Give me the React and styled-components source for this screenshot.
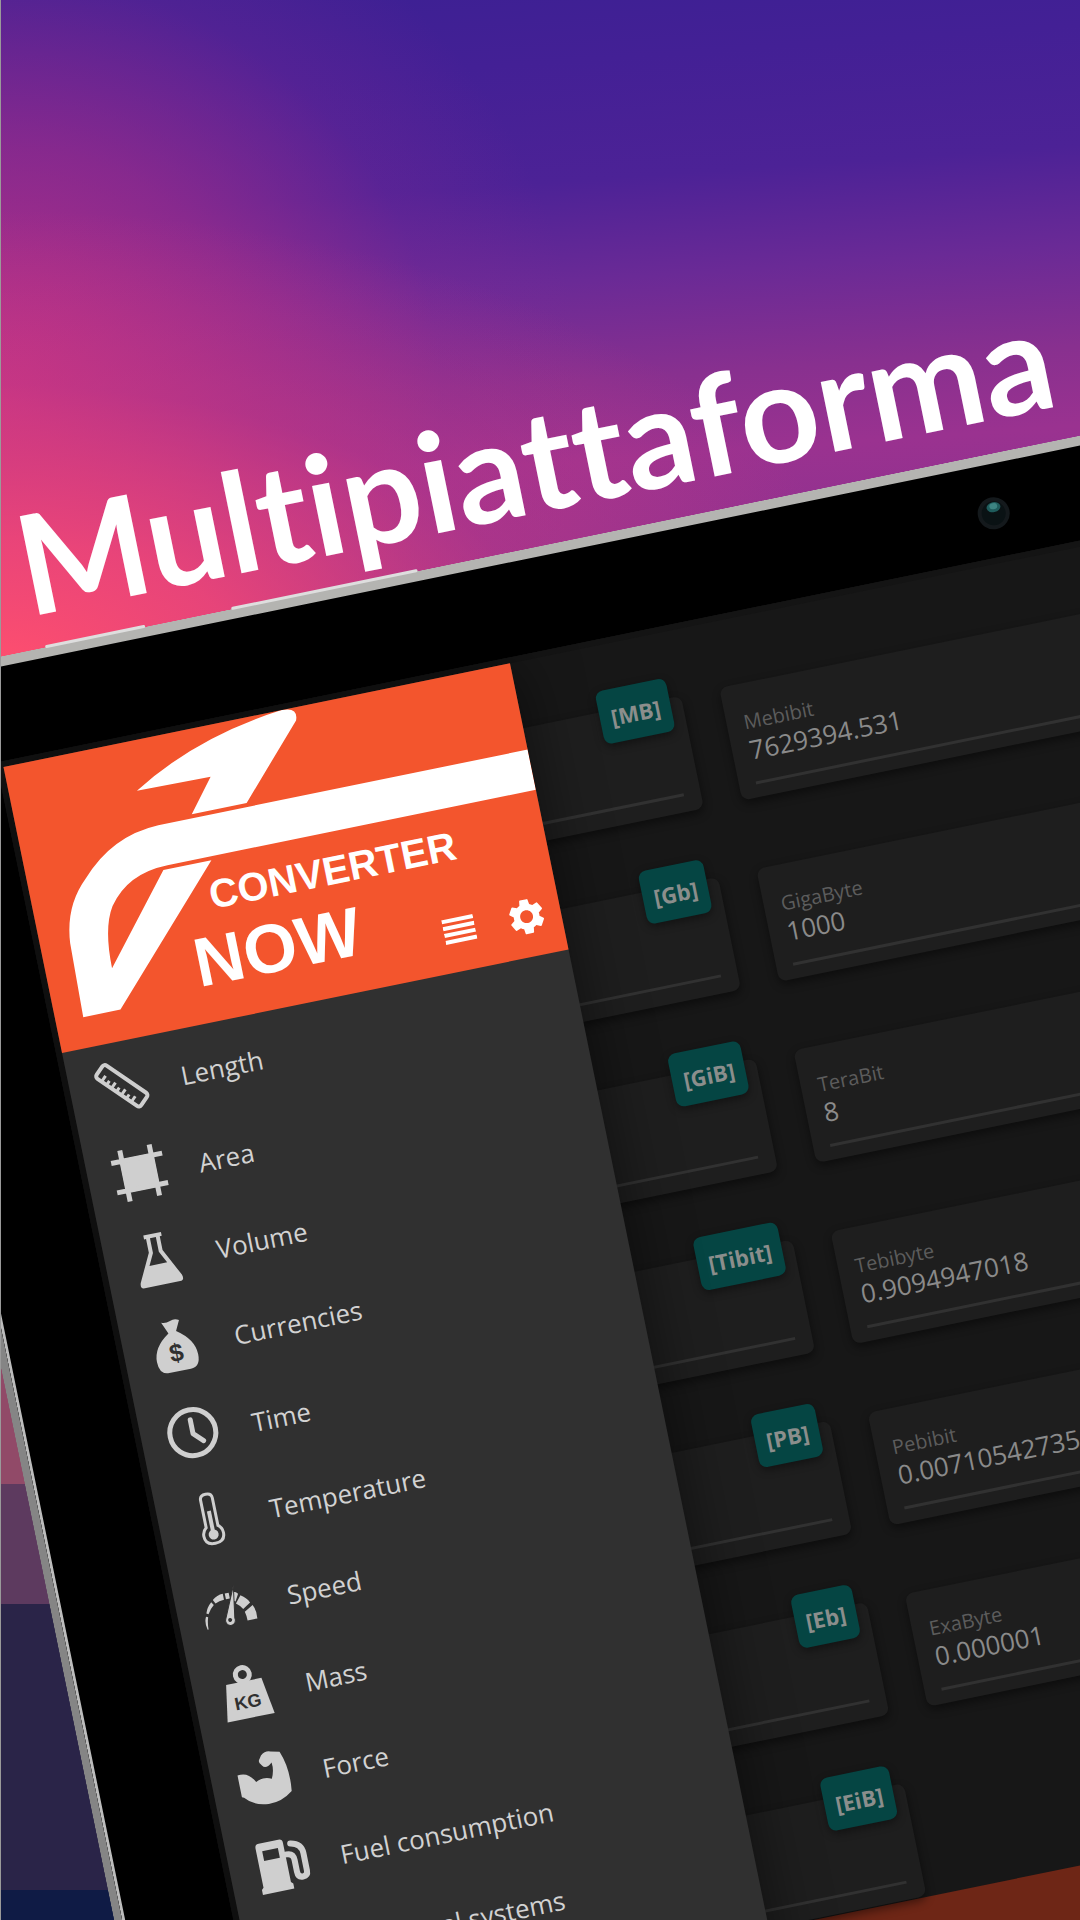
import React from "react";
import styled, { createGlobalStyle } from "styled-components";
import { MdSettings } from "react-icons/md";

const ui = '"Open Sans", "Noto Sans", sans-serif';

const Global = createGlobalStyle`
  *, *::before, *::after { box-sizing: border-box; }
  html, body { margin: 0; background: #3f2093; }
  body { font-family: ${ui}; }
`;

const Page = styled.main`
  height: 100vh;
  overflow: hidden;
  border-left: 1px solid #9a9a9a;
  background:
    linear-gradient(to bottom, transparent 0 1484px, #5d3a5f 1484px 1604px, #2a2448 1604px 1890px, #0f1b45 1890px) 0 0 / 12% 100% no-repeat,
    linear-gradient(#914a68, #914a68) 0 1300px / 12% 184px no-repeat,
    radial-gradient(ellipse 880px 460px at 0 670px, #ff4f6e 0%, rgba(244, 72, 118, 0.85) 28%, rgba(210, 60, 130, 0.4) 62%, rgba(180, 50, 140, 0) 100%),
    radial-gradient(ellipse 580px 560px at 0 400px, rgba(196, 50, 132, 0.95) 0%, rgba(165, 45, 138, 0.68) 45%, rgba(130, 40, 148, 0.26) 76%, rgba(110, 35, 150, 0) 100%),
    linear-gradient(176deg, #3c2093 0, #432095 100px, #4c2296 220px, #6a2a96 320px, #88308f 420px, #9a3290 500px, #8a308e 640px);
`;

const Scene = styled.div`
  width: 2286px;
  margin: 489px 0 0 -180px;
  transform: rotate(-11.57deg);
  transform-origin: 0 0;
`;

const Title = styled.h1`
  height: 200px;
  margin: 0;
  padding: 14px 0 0 178px;
  font: 700 139px/200px Lato, "Open Sans", sans-serif;
  font-variant-ligatures: none;
  color: #fff;
  white-space: nowrap;
`;

const Tablet = styled.section`
  position: relative;
  border: 10px solid #b4b4b1;
  border-left: 8px solid #858585;
  border-radius: 60px;
  background: #000;
  box-shadow: inset 3px 0 0 #bcbcbc;
  padding: 0 106px 100px 109px;
`;

const SideButton = styled.span`
  position: absolute;
  top: -12px;
  left: ${(p) => p.$start}px;
  width: ${(p) => p.$length}px;
  height: 3px;
  border-radius: 2px;
  background: #dedede;
`;

const Bezel = styled.div`
  height: 93px;
  display: flex;
  align-items: center;
  justify-content: center;
  padding-top: 4px;
`;

const Screen = styled.div`
  position: relative;
  border: 6px solid #141414;
  background: #171717;
`;

const Grid = styled.div`
  height: 1292px;
  padding: 66px 80px 0 76px;
  display: grid;
  grid-template-columns: repeat(3, 1fr);
  grid-auto-rows: 115px;
  gap: 70px 39px;
`;

const Card = styled.div`
  position: relative;
  grid-column: ${(p) => p.$column};
  display: flex;
  flex-direction: column;
  padding: 26px 17px 16px;
  border-radius: 8px;
  background: #1e1e1e;
  box-shadow: 0 4px 10px rgba(0, 0, 0, 0.45);
`;

const FieldLabel = styled.label`
  font-size: 20px;
  line-height: 26px;
  color: #5c5c5c;
`;

const Field = styled.input`
  width: 100%;
  height: 50px;
  margin-top: auto;
  padding: 0 0 18px;
  border: 0;
  border-bottom: 3px solid #313131;
  background: transparent;
  font: 500 26px/29px ${ui};
  color: #8a8a8a;
  outline: 0;
`;

const Badge = styled.span`
  position: absolute;
  top: -21px;
  right: 12px;
  height: 54px;
  padding: 0 11px;
  border-radius: 8px;
  background: #054543;
  box-shadow: 0 3px 8px rgba(0, 0, 0, 0.4);
  font-size: 22px;
  font-weight: 700;
  line-height: 56px;
  color: #8b8e8c;
`;

const Footer = styled.footer`
  height: 120px;
  background: #6e2616;
`;

const Drawer = styled.aside`
  position: absolute;
  top: 0;
  left: 0;
  width: 517px;
  height: 100%;
  background: #303030;
  box-shadow: 0 0 60px rgba(0, 0, 0, 0.5);
`;

const Brand = styled.header`
  position: relative;
  height: 292px;
  background: #f3552d;
  display: flex;
  align-items: flex-end;
  justify-content: flex-end;
  gap: 20px;
  padding: 0 11px 17px 0;
`;

const Logo = styled.svg`
  position: absolute;
  inset: 0;
  width: 100%;
  height: 100%;
`;

const IconButton = styled.button`
  position: relative;
  display: flex;
  align-items: center;
  justify-content: center;
  width: 48px;
  height: 48px;
  padding: 0;
  border: 0;
  background: none;
  color: #fff;
`;

const List = styled.ul`
  height: 972px;
  margin: 0;
  padding: 0;
  display: flex;
  flex-direction: column;
  list-style: none;
`;

const Item = styled.li`
  flex: 1;
  display: flex;
`;

const ItemLink = styled.a`
  flex: 1;
  display: flex;
  align-items: center;
  gap: 34px;
  padding-left: 26px;
  font-size: 26px;
  font-weight: 500;
  line-height: 36px;
  color: #d2d2d2;
  text-decoration: none;
`;

const ItemText = styled.span`
  padding-top: 4px;
`;

const Glyph = styled.svg`
  width: 52px;
  height: 52px;
  flex: none;
  fill: #cfcfcf;
  overflow: visible;
`;

const Cam = styled.svg`
  width: 34px;
  height: 34px;
`;

const line = { fill: "none", stroke: "#cfcfcf" };
const dark = "#303030";

const icons = {
  ruler: (
    <g transform="rotate(46 26 26)" {...line} strokeWidth="4">
      <rect x="-1" y="18" width="54" height="16" rx="3" />
      <path d="M7 34v-7M13 34v-5M19 34v-7M25 34v-5M31 34v-7M37 34v-5M43 34v-7" strokeWidth="3" />
    </g>
  ),
  area: (
    <g>
      <path d="M9 9h34v34H9z" />
      <path d="M11 0v52M41 0v52M0 11h52M0 41h52" {...line} strokeWidth="5" />
    </g>
  ),
  flask: (
    <g>
      <path d="M17 0h18v4h-2v14l14 28q2 6-3 6H8q-5 0-3-6l14-28V4h-2z" />
      <path d="M23 4h6v15l6 12H17l6-12z" fill={dark} />
    </g>
  ),
  bag: (
    <g>
      <path d="M17 1q4 2 9 0 5-2 9 1l-5 10q17 12 17 27 0 13-10 13H15Q5 52 5 39q0-15 17-26z" />
      <text x="26" y="42" textAnchor="middle" fontFamily="Liberation Sans" fontWeight="700" fontSize="25" fill={dark}>$</text>
    </g>
  ),
  clock: (
    <g {...line}>
      <circle cx="26" cy="26" r="23" strokeWidth="5" />
      <path d="M26 13v14l9 9" strokeWidth="5" strokeLinecap="round" strokeLinejoin="round" />
    </g>
  ),
  thermometer: (
    <g {...line} strokeWidth="3">
      <path d="M20 34V6q0-5 6-5t6 5v28q4 3 4 8 0 9-10 9t-10-9q0-5 4-8z" />
      <path d="M26 18v22" strokeWidth="4" />
      <circle cx="26" cy="42" r="5" fill="#cfcfcf" stroke="none" />
    </g>
  ),
  gauge: (
    <g>
      <path d="M1 46q-2-7 1-13l2 1q-2 6-2 12zM3 30q2-6 7-10l2 3q-4 3-7 8zM12 18q5-4 11-4v6q-5 0-9 2zM25 14l4 0v6h-4zM33 14q4 1 5 3l-4 7q-3-2-4-2zM40 19q6 4 8 9l-8 5q-2-4-6-7zM50 31q3 6 2 14H42q0-5-1-9z" />
      <path d="M35 8l-5 32a5 5 0 1 1-9-1z" stroke={dark} strokeWidth="1" />
      <circle cx="25" cy="41" r="2" fill={dark} />
    </g>
  ),
  weight: (
    <g>
      <circle cx="26" cy="8" r="7" {...line} strokeWidth="5" />
      <path d="M8 15h36l6 37H2z" />
      <text x="26" y="42" textAnchor="middle" fontFamily="Liberation Sans" fontWeight="700" fontSize="18" fill={dark}>KG</text>
    </g>
  ),
  arm: (
    <path d="M28 3q5-4 10-2l9 2q7 18 4 41-12 9-25 8Q11 51 3 41l-2-1V18q11-2 17 10 8-4 16 0 4-8 3-16-7 6-10 1-4-4-1-7z" />
  ),
  pump: (
    <g>
      <path fillRule="evenodd" d="M2 52v-5l2-2V5q0-4 4-4h20q4 0 4 4v40l2 2v5zM10 9v10h16V9z" />
      <path d="M33 17q7 0 7 7v12q0 6 5 6t5-5V19q0-10-11-12" {...line} strokeWidth="6" strokeLinejoin="round" strokeLinecap="round" />
    </g>
  ),
  numeral: <path d="M4 4h20v20H4zM28 4h20v20H28zM4 28h20v20H4zM28 28h20v20H28z" />,
};

const items = [
  ["Length", "ruler"],
  ["Area", "area"],
  ["Volume", "flask"],
  ["Currencies", "bag"],
  ["Time", "clock"],
  ["Temperature", "thermometer"],
  ["Speed", "gauge"],
  ["Mass", "weight"],
  ["Force", "arm"],
  ["Fuel consumption", "pump"],
  ["Numeral systems", "numeral"],
];

const rows = [
  { symbol: "[MB]", name: "Mebibit", value: "7629394.531" },
  { symbol: "[Gb]", name: "GigaByte", value: "1000" },
  { symbol: "[GiB]", name: "TeraBit", value: "8" },
  { symbol: "[Tibit]", name: "Tebibyte", value: "0.9094947018" },
  { symbol: "[PB]", name: "Pebibit", value: "0.007105427358" },
  { symbol: "[Eb]", name: "ExaByte", value: "0.000001" },
  { symbol: "[EiB]" },
];

function Camera() {
  return (
    <Cam viewBox="0 0 34 34" aria-hidden="true">
      <circle cx="17" cy="17" r="16" fill="#14191c" />
      <circle cx="17" cy="17" r="12" fill="#0a1214" />
      <ellipse cx="18" cy="11" rx="7" ry="5" fill="#1f5c5c" />
      <ellipse cx="18" cy="10" rx="4" ry="3" fill="#3d8583" />
    </Cam>
  );
}

function UnitRow({ symbol, name, value }) {
  return (
    <>
      <Card $column={1}>
        <Field aria-label={symbol} />
        <Badge>{symbol}</Badge>
      </Card>
      {name && (
        <Card $column={2}>
          <FieldLabel htmlFor={name}>{name}</FieldLabel>
          <Field id={name} defaultValue={value} />
        </Card>
      )}
    </>
  );
}

export default function App() {
  return (
    <Page>
      <Global />
      <Scene>
        <Title>Multipiattaforma</Title>
        <Tablet>
          <SideButton $start={180} $length={102} />
          <SideButton $start={370} $length={190} />
          <Bezel>
            <Camera />
          </Bezel>
          <Screen>
            <Grid>
              {rows.map((row) => (
                <UnitRow key={row.symbol} {...row} />
              ))}
            </Grid>
            <Footer />
            <Drawer>
              <Brand>
                <Logo viewBox="0 0 517 292" fill="#fff">
                  <path d="M126 50Q195 9 284 0Q301 0 296 13L231 84H175L201 51Z" />
                  <path d="M517 88V129H141Q100 129 79 158Q66 178 66 219L136 133H185L66 261H28L30 186Q33 149 58 126Q92 89 140 88Z" />
                  <text x="176" y="181" fontFamily="Liberation Sans" fontWeight="700" fontSize="40">CONVERTER</text>
                  <text x="148" y="255" fontFamily="Liberation Sans" fontWeight="700" fontSize="69">NOW</text>
                </Logo>
                <IconButton aria-label="Reorder">
                  <svg width="32" height="28" viewBox="0 0 32 28" fill="currentColor" aria-hidden="true">
                    <path d="M0 1h32v4H0zM0 8h32v4H0zM0 15h32v4H0zM0 22h32v4H0z" />
                  </svg>
                </IconButton>
                <IconButton aria-label="Settings">
                  <MdSettings size={43} />
                </IconButton>
              </Brand>
              <List>
                {items.map(([label, icon]) => (
                  <Item key={label}>
                    <ItemLink href="#">
                      <Glyph viewBox="0 0 52 52" aria-hidden="true">
                        {icons[icon]}
                      </Glyph>
                      <ItemText>{label}</ItemText>
                    </ItemLink>
                  </Item>
                ))}
              </List>
            </Drawer>
          </Screen>
        </Tablet>
      </Scene>
    </Page>
  );
}
